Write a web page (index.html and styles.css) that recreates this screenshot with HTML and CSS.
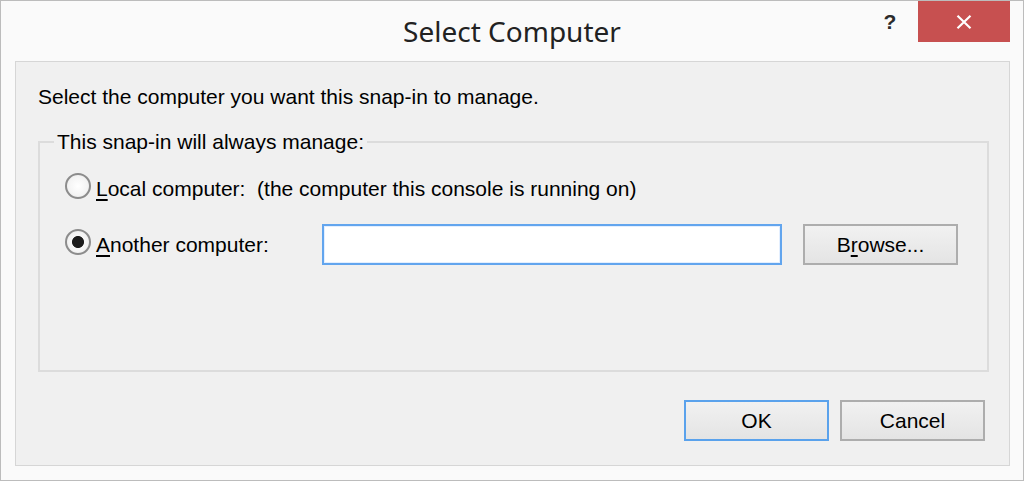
FILE: index.html
```html
<!DOCTYPE html>
<html lang="en">
<head>
<meta charset="utf-8">
<title>Select Computer</title>
<link rel="stylesheet" href="styles.css">
</head>
<body>
<div class="window">
  <div class="titlebar">
    <div class="tb-side"></div>
    <div class="title">Select Computer</div>
    <div class="tb-side tb-controls">
      <span class="help">?</span>
      <span class="close">
        <svg width="16" height="14" viewBox="0 0 16 14"><path d="M1.5 0.8 L14.5 13.2 M14.5 0.8 L1.5 13.2" stroke="#fff" stroke-width="2.2" fill="none"/></svg>
      </span>
    </div>
  </div>
  <div class="panel">
    <p class="intro">Select the computer you want this snap-in to manage.</p>
    <fieldset class="group">
      <legend>This snap-in will always manage:</legend>
      <div class="row row-local">
        <label class="opt">
          <input type="radio" name="target" class="radio">
          <span class="opt-text"><u>L</u>ocal computer:&nbsp; (the computer this console is running on)</span>
        </label>
      </div>
      <div class="row row-other">
        <label class="opt opt-fixed">
          <input type="radio" name="target" class="radio" checked>
          <span class="opt-text"><u>A</u>nother computer:</span>
        </label>
        <input type="text" class="textbox" value="">
        <button class="btn btn-browse" type="button">B<u>r</u>owse...</button>
      </div>
    </fieldset>
    <div class="actions">
      <button class="btn btn-default" type="button">OK</button>
      <button class="btn" type="button">Cancel</button>
    </div>
  </div>
</div>
</body>
</html>
```
FILE: styles.css
```css
* { box-sizing: border-box; }
html, body { margin: 0; padding: 0; }
body {
  width: 1024px;
  height: 481px;
  overflow: hidden;
  background: #fafafa;
  font-family: "Liberation Sans", Arial, sans-serif;
  font-size: 21px;
  line-height: 24px;
  color: #000;
}
.window {
  width: 1024px;
  height: 481px;
  border: 1px solid #bcbcbc;
  background: #fafafa;
  display: flex;
  flex-direction: column;
}
.titlebar {
  height: 60px;
  display: grid;
  grid-template-columns: 1fr auto 1fr;
  align-items: start;
}
.title {
  font-family: "Noto Sans", "Open Sans", sans-serif;
  font-size: 28px;
  line-height: 38px;
  color: #222;
  padding-top: 11px;
  white-space: nowrap;
}
.tb-controls {
  display: flex;
  justify-content: flex-end;
  align-items: flex-start;
  padding-right: 13px;
}
.help {
  width: 28px;
  margin-right: 14px;
  margin-top: 9px;
  text-align: center;
  font-family: "Liberation Sans", Arial, sans-serif;
  font-weight: bold;
  font-size: 21px;
  line-height: 24px;
  color: #2b2b2b;
}
.close {
  width: 92px;
  height: 41px;
  background: #c75050;
  display: flex;
  align-items: center;
  justify-content: center;
}
.panel {
  margin-left: 14px;
  width: 995px;
  height: 405px;
  border: 1px solid #d6d6d6;
  background: #f0f0f0;
  padding: 23px 20px 0 22px;
  display: flex;
  flex-direction: column;
}
.intro {
  margin: 0;
  white-space: nowrap;
}
.group {
  margin: 21px 0 0 0;
  border: 2px solid #dcdcdc;
  padding: 19px 0 105px 25px;
  min-width: 0;
}
.group legend {
  padding: 0 3px;
  margin-left: -11px;
  white-space: nowrap;
}
.row {
  display: flex;
  align-items: center;
}
.row-other {
  margin-top: 19px;
  height: 41px;
}
.opt {
  display: flex;
  align-items: center;
  white-space: nowrap;
}
.opt-fixed {
  width: 257px;
  flex: none;
}
.radio {
  -webkit-appearance: none;
  appearance: none;
  margin: 0 5px 6px 0;
  width: 26px;
  height: 26px;
  flex: none;
  border-radius: 50%;
  border: 2px solid #8c8c8c;
  background: radial-gradient(circle at 50% 50%, #ffffff 0, #f4f4f4 60%, #e2e2e2 100%);
}
.radio:checked {
  background:
    radial-gradient(circle at 50% 50%, #1c1c1c 0, #1c1c1c 5.6px, rgba(28,28,28,0) 6.4px),
    radial-gradient(circle at 50% 50%, #ffffff 0, #f4f4f4 60%, #e2e2e2 100%);
}
.opt-text u, .btn u { text-decoration-thickness: 2px; text-underline-offset: 3px; }
.textbox {
  width: 460px;
  height: 41px;
  flex: none;
  margin: 0;
  border: 2px solid #62a5ee;
  box-shadow: inset 0 0 0 1px #e3efff;
  background: #fff;
  outline: none;
  font: inherit;
  padding: 0 6px;
}
.btn {
  font-family: inherit;
  font-size: 21px;
  line-height: 24px;
  color: #000;
  height: 41px;
  width: 145px;
  margin: 0;
  padding: 0;
  border: 2px solid #adadad;
  background: linear-gradient(#f1f1f1, #e4e4e4);
  text-align: center;
}
.btn-browse {
  width: 155px;
  margin-left: 21px;
}
.btn-default {
  border-color: #5aa2ec;
}
.actions {
  display: flex;
  justify-content: flex-end;
  gap: 11px;
  margin-top: 28px;
  padding-right: 4px;
}
```
